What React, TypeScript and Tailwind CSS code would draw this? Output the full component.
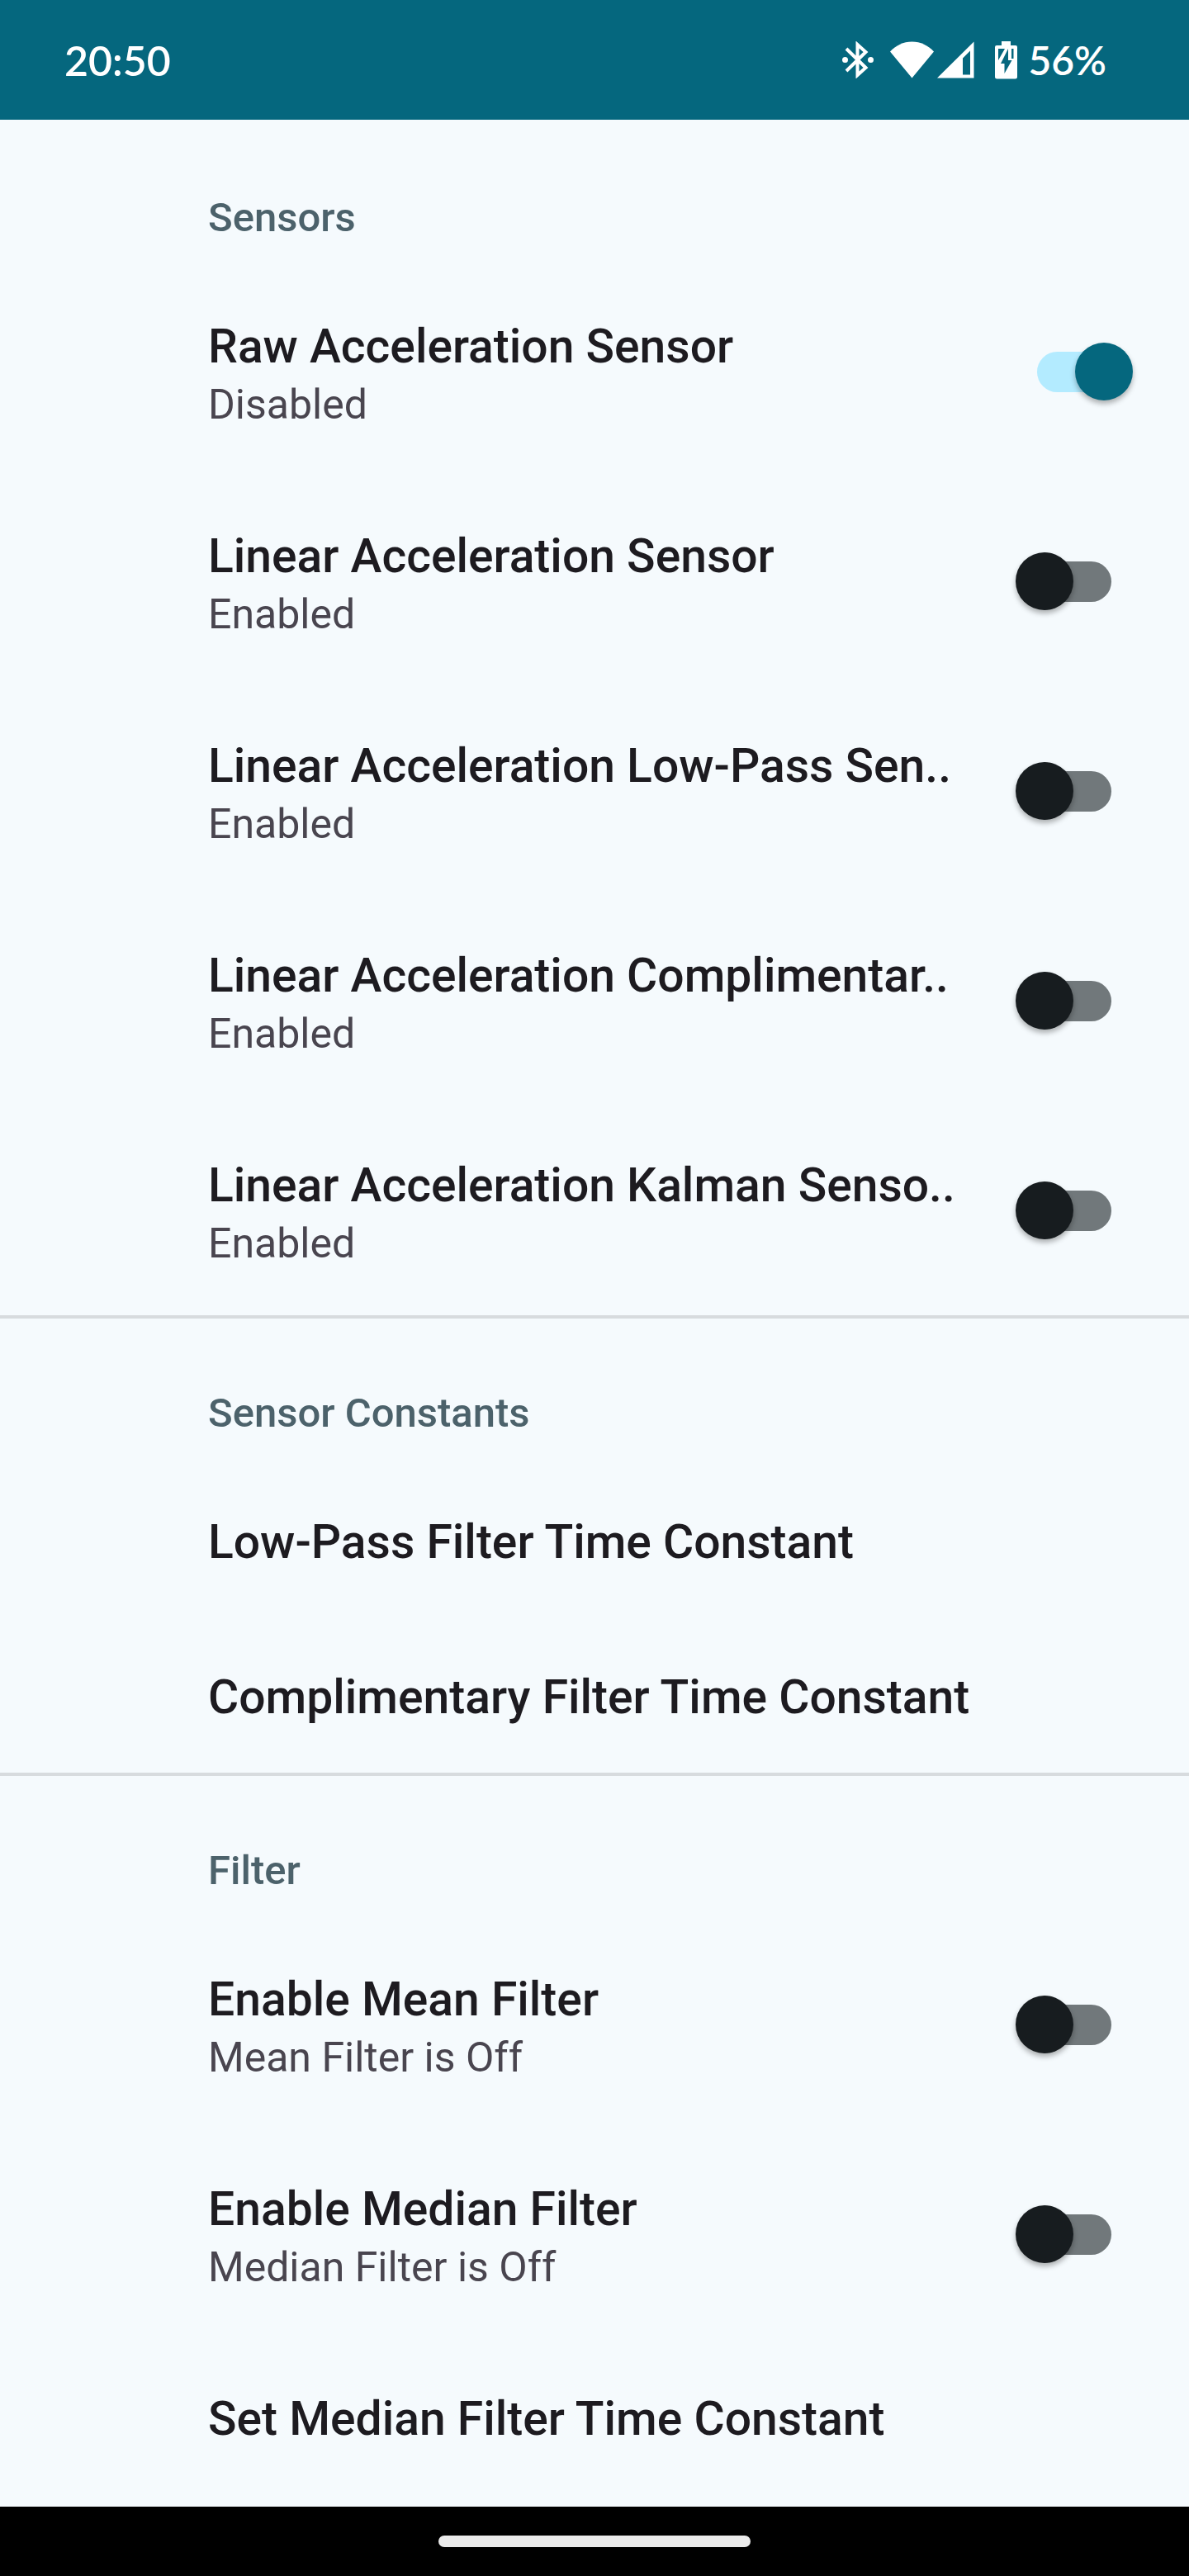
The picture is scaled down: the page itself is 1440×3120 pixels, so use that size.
import { useState } from "react";

type Preference = {
  id: string;
  title: string;
  summary?: string;
  enabled?: boolean;
};

type Category = {
  name: string;
  preferences: Preference[];
};

const categories: Category[] = [
  {
    name: "Sensors",
    preferences: [
      { id: "raw", title: "Raw Acceleration Sensor", summary: "Disabled", enabled: true },
      { id: "linear", title: "Linear Acceleration Sensor", summary: "Enabled", enabled: false },
      { id: "low-pass", title: "Linear Acceleration Low-Pass Sen..", summary: "Enabled", enabled: false },
      { id: "complimentary", title: "Linear Acceleration Complimentar..", summary: "Enabled", enabled: false },
      { id: "kalman", title: "Linear Acceleration Kalman Senso..", summary: "Enabled", enabled: false },
    ],
  },
  {
    name: "Sensor Constants",
    preferences: [
      { id: "low-pass-constant", title: "Low-Pass Filter Time Constant" },
      { id: "complimentary-constant", title: "Complimentary Filter Time Constant" },
    ],
  },
  {
    name: "Filter",
    preferences: [
      { id: "mean", title: "Enable Mean Filter", summary: "Mean Filter is Off", enabled: false },
      { id: "median", title: "Enable Median Filter", summary: "Median Filter is Off", enabled: false },
      { id: "median-constant", title: "Set Median Filter Time Constant" },
    ],
  },
];

function StatusIcons() {
  return (
    <div className="flex items-center" aria-hidden="true">
      <svg className="mr-5 h-[45px] w-[38px]" viewBox="0 0 38 45" fill="none">
        <path
          d="M5 9L28.500 32L18.500 41V4L28.500 13L5 36"
          stroke="white"
          strokeWidth="4"
        />
        <circle cx="3.500" cy="22.500" r="3.500" fill="white" />
        <circle cx="34.500" cy="22.500" r="3.500" fill="white" />
      </svg>
      <svg className="mr-1 h-[45px] w-[53px]" viewBox="0 0 53 45" fill="white">
        <path d="M0 12.500C7 5 16 .500 26.500 .500S46 5 53 12.500L26.500 44.500Z" />
      </svg>
      <svg className="mr-[25px] h-[45px] w-[45px]" viewBox="0 0 45 45" fill="white">
        <path fillRule="evenodd" d="M44.500 .500V44.500H0ZM40 11.500L31 20.500V40.500H40Z" />
      </svg>
      <svg className="mr-[13px] h-[46px] w-[27px]" viewBox="0 0 27 46" fill="white">
        <path
          fillRule="evenodd"
          d="M8 0H19V5H25Q27 5 27 7V43Q27 45.500 24.500 45.500H2.500Q0 45.500 0 43V7Q0 5 2 5H8ZM4 9V23L12 9ZM20 9V21H22.500V9ZM16 9L7 27H11.500V39L20.500 23H16Z"
        />
      </svg>
    </div>
  );
}

function Switch({
  id,
  checked,
  onChange,
}: {
  id: string;
  checked: boolean;
  onChange: () => void;
}) {
  return (
    <input
      id={id}
      type="checkbox"
      role="switch"
      checked={checked}
      onChange={onChange}
      className="grid h-[70px] w-[142px] shrink-0 cursor-pointer appearance-none items-center before:col-start-1 before:row-start-1 before:h-[49px] before:w-[90px] before:justify-self-center before:rounded-full before:bg-[#71787b] before:content-[''] after:col-start-1 after:row-start-1 after:size-[70px] after:rounded-full after:bg-[#171c1f] after:shadow-[0_4px_6px_rgba(0,0,0,0.3)] after:content-[''] checked:before:bg-[#b3ebff] checked:after:justify-self-end checked:after:bg-[#05677e]"
    />
  );
}

function PreferenceRow({ preference }: { preference: Preference }) {
  const [enabled, setEnabled] = useState(preference.enabled ?? false);

  if (preference.enabled === undefined) {
    return (
      <button
        type="button"
        className="block w-full pt-[60px] pr-[68px] pb-[54px] pl-[252px] text-left text-[57px] leading-[74px] font-medium text-[#1d1b20]"
      >
        {preference.title}
      </button>
    );
  }

  return (
    <div className="flex items-center pr-[68px] pl-[252px]">
      <label
        htmlFor={preference.id}
        className="min-w-0 flex-1 cursor-pointer pt-[60px] pb-[54px]"
      >
        <span className="block truncate text-[57px] leading-[74px] font-medium text-[#1d1b20]">
          {preference.title}
        </span>
        <span className="block text-[50px] leading-[66px] text-[#49454f]">
          {preference.summary}
        </span>
      </label>
      <Switch
        id={preference.id}
        checked={enabled}
        onChange={() => setEnabled(!enabled)}
      />
    </div>
  );
}

export default function App() {
  return (
    <div className="flex min-h-screen flex-col bg-[#f5fafd] font-[Roboto,sans-serif]">
      <header className="flex h-[145px] items-center justify-between bg-[#05677e] pr-[100px] pl-[78px] font-[Lato,sans-serif] leading-[58px] font-semibold text-white">
        <time className="text-[50px]">20:50</time>
        <div className="flex items-center text-[48px]">
          <StatusIcons />
          <span>56%</span>
        </div>
      </header>

      <main className="flex-1">
        {categories.map((category, index) => (
          <section
            key={category.name}
            className={index > 0 ? "shadow-[inset_0_4px_0_#d7dbde]" : ""}
          >
            <h2 className="pt-[86px] pb-[26px] pl-[252px] text-[49px] leading-[66px] font-medium text-[#4c626b]">
              {category.name}
            </h2>
            {category.preferences.map((preference) => (
              <PreferenceRow key={preference.id} preference={preference} />
            ))}
          </section>
        ))}
      </main>

      {/* Gesture navigation bar */}
      <footer className="flex h-[84px] items-center justify-center bg-black">
        <div className="h-[14px] w-[378px] rounded-full bg-[#ebebeb]" />
      </footer>
    </div>
  );
}
